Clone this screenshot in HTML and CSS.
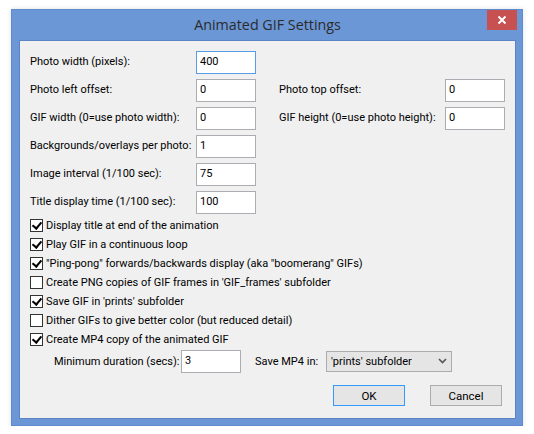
FILE: index.html
```html
<!DOCTYPE html>
<html lang="en">
<head>
	<meta charset="UTF-8">
	<title>Animated GIF Settings</title>
	<link rel="stylesheet" href="styles.css">
</head>
<body>
	<div class="win">
		<div class="title_bar">
			Animated GIF Settings
			<div class="close">
				<svg width="10" height="10" viewBox="0 0 10 10"><path d="M1.5 1.5L8.5 8.5M8.5 1.5L1.5 8.5" stroke="#fff" stroke-width="2"/></svg>
			</div>
		</div>
		<div class="client">
			<div class="fields">
				<label>Photo width (pixels):</label>
				<div><input class="box focus" type="text" value="400"></div>
				<span></span><span></span>

				<label>Photo left offset:</label>
				<div><input class="box" type="text" value="0"></div>
				<label>Photo top offset:</label>
				<div><input class="box" type="text" value="0"></div>

				<label>GIF width (0=use photo width):</label>
				<div><input class="box" type="text" value="0"></div>
				<label>GIF height (0=use photo height):</label>
				<div><input class="box" type="text" value="0"></div>

				<label>Backgrounds/overlays per photo:</label>
				<div><input class="box" type="text" value="1"></div>
				<span></span><span></span>

				<label>Image interval (1/100 sec):</label>
				<div><input class="box" type="text" value="75"></div>
				<span></span><span></span>

				<label>Title display time (1/100 sec):</label>
				<div><input class="box" type="text" value="100"></div>
				<span></span><span></span>
			</div>

			<ul class="checks">
				<li><span class="chk on"></span>Display title at end of the animation</li>
				<li><span class="chk on"></span>Play GIF in a continuous loop</li>
				<li><span class="chk on"></span>"Ping-pong" forwards/backwards display (aka "boomerang" GIFs)</li>
				<li><span class="chk"></span>Create PNG copies of GIF frames in 'GIF_frames' subfolder</li>
				<li><span class="chk on"></span>Save GIF in 'prints' subfolder</li>
				<li><span class="chk"></span>Dither GIFs to give better color (but reduced detail)</li>
				<li><span class="chk on"></span>Create MP4 copy of the animated GIF</li>
			</ul>

			<div class="mp4_row">
				<label class="dur">Minimum duration (secs):</label>
				<input class="box" type="text" value="3">
				<label class="save">Save MP4 in:</label>
				<div class="sel">
					'prints' subfolder
					<svg width="9" height="6" viewBox="0 0 9 6"><path d="M1 1L4.5 4.5L8 1" stroke="#555" stroke-width="1.6" fill="none"/></svg>
				</div>
			</div>

			<div class="btns">
				<button class="def">OK</button>
				<button>Cancel</button>
			</div>
		</div>
	</div>
</body>
</html>
```

FILE: styles.css
```css
*{margin:0;padding:0;box-sizing:border-box;}
ul{list-style:none;}
body{background:#fff;font-family:Roboto,"Open Sans",sans-serif;font-size:11px;color:#000;}
.win{width:512px;height:417px;margin:9px 0 0 11px;background:#6b97d7;border:1px solid #5f8bcf;padding:0 6px 6px 7px;box-shadow:0 0 5px rgba(0,0,0,0.12);}
.title_bar{height:30px;position:relative;text-align:center;line-height:29px;font-family:"Open Sans",sans-serif;font-size:14.3px;color:#2b2b2b;}
.close{width:30px;height:20px;background:#c75050;position:absolute;right:-1px;top:0;display:flex;align-items:center;justify-content:center;}
.client{height:379px;background:#f0f0f0;border:1px solid #5a84c4;padding:10px 11px 0 10px;}
.fields{display:grid;grid-template-columns:166px 83px 166px 60px;grid-auto-rows:23px;row-gap:5px;}
.fields label{line-height:22px;white-space:nowrap;}
.box{width:60px;height:23px;border:1px solid #abadb3;background:#fff;font:inherit;padding:0 0 2px 3px;outline:none;color:#000;}
.box.focus{border-color:#569de5;}
.checks{margin-top:2px;}
.checks li{height:19px;line-height:19px;display:flex;align-items:center;white-space:nowrap;}
.chk{width:13px;height:13px;border:1px solid #333;background:#fff;margin-right:3px;flex:none;position:relative;}
.chk.on::after{content:"";position:absolute;left:3px;top:0px;width:4px;height:7px;border:solid #000;border-width:0 2px 2px 0;transform:rotate(40deg);}
.mp4_row{display:flex;align-items:center;height:23px;padding-left:24px;margin-top:1px;}
.mp4_row .dur{width:127px;white-space:nowrap;}
.mp4_row .save{width:71px;margin-left:14px;white-space:nowrap;}
.sel{width:126px;height:21px;border:1px solid #acacac;background:#e5e5e5;display:flex;align-items:center;justify-content:space-between;padding:0 4px 1px 4px;}
.btns{display:flex;justify-content:flex-end;gap:25px;margin-top:12px;padding-right:2px;}
.btns button{width:72px;height:21px;border:1px solid #acacac;background:#e5e5e5;font:inherit;font-size:11.5px;color:#000;}
.btns .def{border-color:#3399ff;}
```
